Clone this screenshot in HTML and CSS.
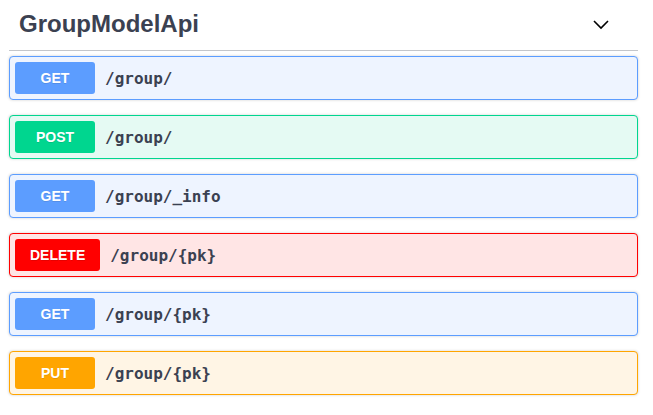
FILE: index.html
```html
<!DOCTYPE html>
<html>
<head>
<meta charset="utf-8">
<link rel="stylesheet" href="styles.css">
</head>
<body>
<div class="wrap">
  <h4 class="tag">
    <span class="tag-name">GroupModelApi</span>
    <svg class="chevron" width="16" height="10" viewBox="0 0 16 10"><polyline points="1,1 8,8 15,1" fill="none" stroke="#000" stroke-width="1.6"/></svg>
  </h4>
  <div class="op op-get"><span class="method">GET</span><span class="path">/group/</span></div>
  <div class="op op-post"><span class="method">POST</span><span class="path">/group/</span></div>
  <div class="op op-get"><span class="method">GET</span><span class="path">/group/_info</span></div>
  <div class="op op-delete"><span class="method">DELETE</span><span class="path">/group/{pk}</span></div>
  <div class="op op-get"><span class="method">GET</span><span class="path">/group/{pk}</span></div>
  <div class="op op-put"><span class="method">PUT</span><span class="path">/group/{pk}</span></div>
</div>
</body>
</html>
```
FILE: styles.css
```css
html, body { margin: 0; padding: 0; background: #fff; }
.wrap { padding: 0 15px 0 9px; }
.tag {
  display: flex;
  align-items: center;
  justify-content: space-between;
  margin: 0 0 5px;
  height: 30px;
  padding: 9px 29px 11px 10px;
  border-bottom: 1px solid rgba(59,65,81,.3);
  font-family: "Liberation Sans", Arial, sans-serif;
  font-size: 24px;
  font-weight: 700;
  color: #3b4151;
}
.tag-name { line-height: 30px; }
.chevron { display: block; margin-top: 2px; }
.op {
  display: flex;
  align-items: center;
  padding: 5px;
  margin: 0 0 15px;
  border: 1px solid;
  border-radius: 4px;
  box-shadow: 0 0 3px rgba(0,0,0,.19);
}
.method {
  min-width: 50px;
  padding: 6px 15px;
  line-height: 20px;
  border-radius: 3px;
  text-align: center;
  font-family: "Liberation Sans", Arial, sans-serif;
  font-size: 14px;
  font-weight: 700;
  color: #fff;
  text-shadow: 0 1px 0 rgba(0,0,0,.1);
}
.path {
  padding: 0 10px;
  font-family: "DejaVu Sans Mono", monospace;
  font-size: 16px;
  font-weight: 700;
  color: #3b4151;
}
.op-get { border-color: #5c9dff; background: #eef4ff; }
.op-get .method { background: #5c9dff; }
.op-post { border-color: #00d68f; background: #e5faf3; }
.op-post .method { background: #00d68f; }
.op-delete { border-color: #ff0000; background: #ffe5e5; }
.op-delete .method { background: #ff0000; }
.op-put { border-color: #ffa500; background: #fff5e5; }
.op-put .method { background: #ffa500; }
```
